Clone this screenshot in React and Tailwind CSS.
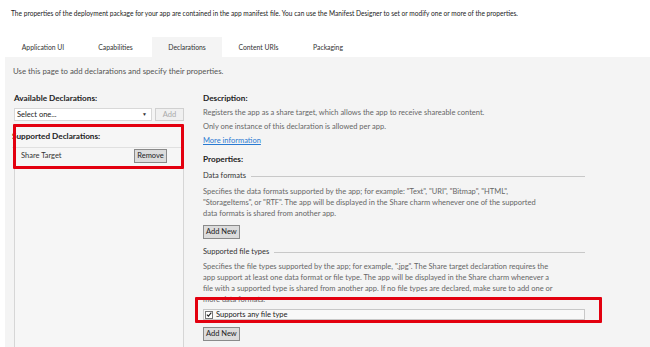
import React from 'react';

const tabs = [
  { label: 'Application UI', w: 'w-[72px]' },
  { label: 'Capabilities', w: 'w-[73px]' },
  { label: 'Declarations', w: 'w-[70px]', active: true },
  { label: 'Content URIs', w: 'w-[73px]' },
  { label: 'Packaging', w: 'w-[66px]' },
];

function Btn({ children, className = '' }) {
  return (
    <div className={`h-[14px] px-[2px] flex items-center justify-center whitespace-nowrap border border-[#8a8a8a] bg-[#dcdcdc] text-[#222] ${className}`}>
      {children}
    </div>
  );
}

export default function App() {
  return (
    <div className="relative w-[650px] h-[347px] overflow-hidden bg-white text-[#333] font-['Lato',sans-serif] text-[7.5px]">
      <p className="pt-[7px] pl-[11px] leading-[12px] text-[#222] text-[6.6px] whitespace-nowrap">
        The properties of the deployment package for your app are contained in the app manifest file. You can use the Manifest Designer to set or modify one or more of the properties.
      </p>

      {/* tabs */}
      <div className="mt-[18px] ml-[7px] flex h-[20px] text-[6.8px]">
        {tabs.map(t => (
          <div
            key={t.label}
            className={`${t.w} flex items-center justify-center text-[#333] ${t.active ? 'bg-[#f4f4f4]' : ''}`}
          >
            {t.label}
          </div>
        ))}
      </div>

      {/* content */}
      <div className="ml-[5px] h-[290px] bg-[#f4f4f4]">
        <p className="pl-[8px] pt-[8px] leading-[12px] text-[#555] text-[7.8px]">
          Use this page to add declarations and specify their properties.
        </p>

        <div className="flex mt-[14px]">
          {/* left */}
          <div className="ml-[9px] w-[170px] flex flex-col">
            <div className="h-[14px] flex items-center font-bold text-[8.2px] text-[#222]">Available Declarations:</div>
            <div className="mt-[3px] flex gap-[3px]">
              <div className="w-[138px] h-[13px] flex items-center justify-between bg-white border border-[#d8d8d8] pl-[2px] pr-[4px] text-[#222]">
                <span>Select one...</span>
                <span className="text-[5px] text-[#333]">▼</span>
              </div>
              <div className="w-[29px] h-[13px] flex items-center justify-center border border-[#d0d0d0] bg-[#f0f0f0] text-[#aaa]">
                Add
              </div>
            </div>
            <div className="mt-[5px] h-[300px] border-x border-[#d6d6d6] bg-[#f6f6f6]">
              <div className="h-[22px] flex items-center -ml-[3px] font-bold text-[8.2px] text-[#222] border-b border-[#e0e0e0]">
                Supported Declarations:
              </div>
              <div className="h-[16px] flex items-center justify-between pl-[6px] pr-[16px] text-[#333]">
                <span>Share Target</span>
                <Btn className="w-[33px]">Remove</Btn>
              </div>
            </div>
          </div>

          {/* right */}
          <div className="ml-[19px] w-[382px] flex flex-col">
            <div className="h-[14px] flex items-center font-bold text-[8.2px] text-[#222]">Description:</div>
            <div className="mt-[1px] leading-[14px] text-[#666]">
              Registers the app as a share target, which allows the app to receive shareable content.
            </div>
            <div className="leading-[14px] text-[#666]">
              Only one instance of this declaration is allowed per app.
            </div>
            <div className="leading-[14px] text-[#2a7ad2] underline">More information</div>
            <div className="mt-[4px] leading-[14px] font-bold text-[8.2px] text-[#222]">Properties:</div>
            <div className="mt-[3px] h-[14px] flex items-center gap-[5px] text-[#333]">
              <span>Data formats</span>
              <div className="flex-1 h-px bg-[#c8c8c8]" />
            </div>
            <p className="mt-[3px] pr-[44px] leading-[11px] text-[#666]">
              Specifies the data formats supported by the app; for example: "Text", "URI", "Bitmap", "HTML", "StorageItems", or "RTF". The app will be displayed in the Share charm whenever one of the supported data formats is shared from another app.
            </p>
            <Btn className="mt-[6px] self-start">Add New</Btn>
            <div className="mt-[6px] h-[14px] flex items-center gap-[5px] text-[#333]">
              <span>Supported file types</span>
              <div className="flex-1 h-px bg-[#c8c8c8]" />
            </div>
            <p className="mt-[2px] pr-[30px] leading-[11px] text-[#666]">
              Specifies the file types supported by the app; for example, ".jpg". The Share target declaration requires the app support at least one data format or file type. The app will be displayed in the Share charm whenever a file with a supported type is shared from another app. If no file types are declared, make sure to add one or more data formats.
            </p>
            <div className="mt-[4px] h-[11px] flex items-center gap-[3px] border border-[#c8c8c8] bg-[#f8f8f8] pl-[1px] text-[#222]">
              <div className="w-[8px] h-[8px] border border-[#777] bg-white flex items-center justify-center">
                <svg width="7" height="7" viewBox="0 0 7 7">
                  <path d="M1 3.6 L2.8 5.4 L6.2 1.2" fill="none" stroke="#222" strokeWidth="1.3" />
                </svg>
              </div>
              <span>Supports any file type</span>
            </div>
            <Btn className="mt-[7px] self-start h-[13px]">Add New</Btn>
          </div>
        </div>
      </div>

      {/* highlight overlays */}
      <div className="absolute left-[13px] top-[124px] w-[171px] h-[45px] border-[3px] border-[#e3000f] rounded-[1px]" />
      <div className="absolute left-[195px] top-[297px] w-[407px] h-[26px] border-[3px] border-[#e3000f] rounded-[1px]" />
    </div>
  );
}
